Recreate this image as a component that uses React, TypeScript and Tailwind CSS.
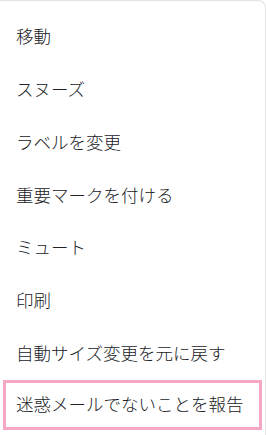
const items = [
  "移動",
  "スヌーズ",
  "ラベルを変更",
  "重要マークを付ける",
  "ミュート",
  "印刷",
  "自動サイズ変更を元に戻す",
];

export default function App() {
  return (
    <div className="h-[435px] w-[266px] overflow-hidden bg-white">
      <div
        className="h-[460px] w-[266px] rounded-tr-lg border-t border-r border-[#e3e3e3] bg-white pt-[9px] text-[17.5px] font-light text-[#202124]"
        style={{ fontFamily: '"Noto Sans CJK JP", "Noto Sans", sans-serif' }}
      >
        {items.map((label) => (
          <div key={label} className="flex h-[52.8px] items-center pl-4">
            {label}
          </div>
        ))}
        <div className="flex h-[52.8px] items-start pl-[3px]">
          <div className="flex h-[50px] w-[259px] items-center border-[3px] border-[#f5a8c6] pl-[10px]">
            迷惑メールでないことを報告
          </div>
        </div>
      </div>
    </div>
  );
}
